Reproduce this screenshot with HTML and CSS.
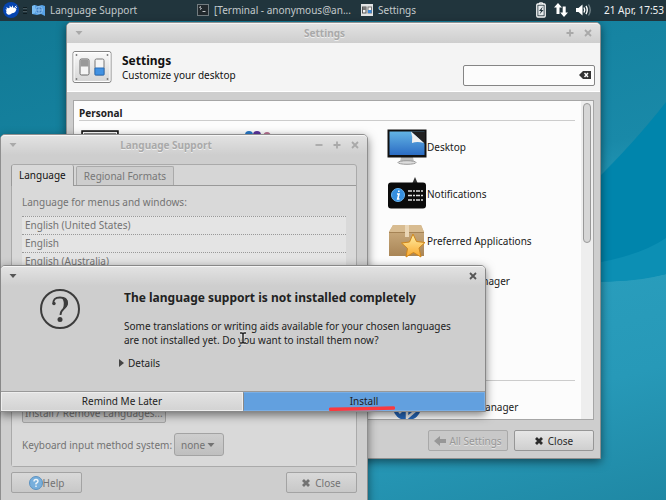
FILE: index.html
```html
<!DOCTYPE html>
<html lang="en">
<head>
<meta charset="utf-8">
<title>Desktop</title>
<link rel="stylesheet" href="styles.css">
</head>
<body>
<svg class="defs" width="0" height="0" aria-hidden="true">
  <defs>
    <linearGradient id="blue" x1="0" y1="0" x2="0" y2="1"><stop offset="0" stop-color="#63b4e4"/><stop offset="1" stop-color="#2b6cc4"/></linearGradient>
    <linearGradient id="box" x1="0" y1="0" x2="0" y2="1"><stop offset="0" stop-color="#cfb184"/><stop offset="1" stop-color="#a98556"/></linearGradient>
    <linearGradient id="star" x1="0" y1="0" x2="0" y2="1"><stop offset="0" stop-color="#fff0a8"/><stop offset="1" stop-color="#f9a72b"/></linearGradient>
    <linearGradient id="plate" x1="0" y1="0" x2="0" y2="1"><stop offset="0" stop-color="#fafafa"/><stop offset="1" stop-color="#d4d4d4"/></linearGradient>
    <symbol id="cross" viewBox="0 0 8 8"><path d="M1 1L7 7M7 1L1 7" stroke="currentColor" stroke-width="1.800" fill="none"/></symbol>
    <symbol id="cross-bold" viewBox="0 0 8 8"><path d="M1 1L7 7M7 1L1 7" stroke="currentColor" stroke-width="2.800" fill="none"/></symbol>
    <symbol id="plus" viewBox="0 0 8 8"><path d="M4 .5V7.5M.5 4H7.5" stroke="currentColor" stroke-width="1.800" fill="none"/></symbol>
    <symbol id="minus" viewBox="0 0 8 8"><path d="M.5 4H7.5" stroke="currentColor" stroke-width="1.800" fill="none"/></symbol>
    <symbol id="down" viewBox="0 0 8 8"><path d="M.5 2H7.5L4 6Z" fill="currentColor"/></symbol>
  </defs>
</svg>

<main class="desktop">
  <svg class="wallpaper" viewBox="0 0 666 500" preserveAspectRatio="none" aria-hidden="true">
    <path d="M666 102Q635 142 590 186V282Q630 282 666 274Z" fill="#0085ac"/>
    <path d="M590 264Q640 256 666 238V274Q630 284 590 280Z" fill="#0c8fb4"/>
  </svg>

  <header class="panel">
    <button class="menu" aria-label="Applications"><svg width="16" height="16" viewBox="0 0 16 16"><circle cx="8" cy="8" r="8" fill="#0645b0"/><path d="M4 12Q2.500 10.500 3.500 9L2.500 7.200L4 7.500L3.300 5L5.300 6.300Q6 5.500 6.800 5.800L6.500 3.500L8.500 5.500L9.800 3.300L10.300 5.800Q12 5.500 13.500 7L12.500 9.500Q11.500 11 9 11.300Q7.500 13 5.500 12.700Z" fill="#fff"/><path d="M11.500 5.500L13.300 3.800M12.500 6L14 5" stroke="#fff"/></svg></button>
    <span class="grip" aria-hidden="true"></span>
    <button class="task task-lang"><svg width="13" height="12" viewBox="0 0 13 12"><path d="M0 2L3 1L6 2L10 1L13 2V12L9 10L5 11L0 10Z" fill="#56a2e6"/><path d="M0 2L3 1V9L0 10Z" fill="#7bbdf2"/><circle cx="7" cy="6" r="3.500" fill="#3c7fc8" stroke="#8ec4f2"/><path d="M7 3V9M4 6H10" stroke="#8ec4f2"/></svg><span>Language Support</span></button>
    <button class="task task-term"><svg width="12" height="12" viewBox="0 0 12 12"><rect x=".5" y=".5" width="11" height="11" fill="#22292d" stroke="#737c80"/><path d="M4 2.500L2.500 3.300L4.500 4.500L3 5.500M5.500 7.500H8.500" stroke="#c2c7c9" fill="none"/></svg><span>[Terminal - anonymous@an...</span></button>
    <button class="task"><svg width="12" height="12" viewBox="0 0 12 12"><rect width="12" height="12" fill="#e2e4e5"/><rect x="1.500" y="3" width="3.500" height="6" fill="#f4f4f4" stroke="#555"/><rect x="2" y="3" width="3" height="3" fill="#777"/><rect x="7" y="3" width="3.500" height="6" fill="#f4f4f4" stroke="#777"/><rect x="7" y="6" width="3.500" height="3" fill="#3b87d8"/></svg><span>Settings</span></button>
    <div class="tray">
      <svg width="10" height="16" viewBox="0 0 10 16"><path d="M3.500 2V.8H6.500V2" fill="none" stroke="#fff"/><rect x=".8" y="2" width="8.400" height="13" rx="1" fill="none" stroke="#fff" stroke-width="1.300"/><rect x="2.300" y="3.600" width="5.400" height="9.800" fill="#e8ecee"/><path d="M6.800 4.500L3 9H5L3.500 12.500L7.500 8H5.500Z" fill="#20333b"/></svg>
      <svg width="14" height="14" viewBox="0 0 14 14"><path d="M4 0L8 4.500H5.500V11H2.500V4.500H0Z" fill="#fff"/><path d="M10 14L14 9.500H11.700V3.500H8.700V9.500H6.200Z" fill="#fff"/></svg>
      <svg width="16" height="14" viewBox="0 0 16 14"><path d="M0 5H2.500L6.500 1.500V12.500L2.500 9H0Z" fill="#fff"/><path d="M8 4.500Q9.500 7 8 9.500M10 2.800Q12.500 7 10 11.200" stroke="#fff" stroke-width="1.400" fill="none"/><path d="M12.500 1.500Q16 7 12.500 12.500" stroke="#76858b" stroke-width="1.300" fill="none"/></svg>
      <time>21 Apr, 17:53</time>
    </div>
  </header>

  <section class="window settings">
    <div class="titlebar"><svg class="glyph"><use href="#down"/></svg><h2>Settings</h2><div class="controls"><svg class="glyph"><use href="#plus"/></svg><svg class="glyph"><use href="#cross"/></svg></div></div>
    <div class="banner">
      <svg width="40" height="34" viewBox="0 0 40 34"><rect x="1" y="1.500" width="38" height="31" rx="2" fill="url(#plate)" stroke="#858585"/><rect x="2" y="2.500" width="36" height="29" rx="1" fill="none" stroke="#fff"/><g fill="#777"><circle cx="4.500" cy="5" r=".9"/><circle cx="35.500" cy="5" r=".9"/><circle cx="4.500" cy="29" r=".9"/><circle cx="35.500" cy="29" r=".9"/></g><rect x="8" y="9" width="9" height="16" rx="1.500" fill="#f5f5f5" stroke="#666"/><rect x="8.500" y="9.500" width="8" height="7" fill="#999"/><rect x="23" y="9" width="9" height="16" rx="1.500" fill="#f5f5f5" stroke="#777"/><path d="M23 18H32V25H23Z" fill="#4292e2" stroke="#2b6fb9"/></svg>
      <div class="heading"><h1>Settings</h1><p>Customize your desktop</p></div>
      <div class="search"><input type="text" aria-label="Search settings"><svg width="12" height="8" viewBox="0 0 12 8"><path d="M4 0H12V8H4L0 4Z" fill="#333"/><path d="M5.500 2L9 6M9 2L5.500 6" stroke="#fff" stroke-width="1.400"/></svg></div>
    </div>
    <div class="listbox">
      <div class="categories">
        <h3>Personal</h3>
        <div class="grid">
          <svg class="peek" width="38" height="30" viewBox="0 0 38 30"><rect x="1" y="1" width="36" height="28" fill="#888" stroke="#111" stroke-width="1.500"/><rect x="2.500" y="2.500" width="33" height="25" fill="none" stroke="#fff"/></svg>
          <svg class="peek" width="38" height="30" viewBox="0 0 38 30"><circle cx="14" cy="5" r="4" fill="#2777c6"/><circle cx="22" cy="5" r="4" fill="#5b359d"/><circle cx="32" cy="5.500" r="3.500" fill="#b87191"/></svg>
          <div class="items">
            <a href="#"><svg width="40" height="36" viewBox="0 0 40 36"><path d="M14 28H26L27 33H13Z" fill="#bdbdbd"/><ellipse cx="20" cy="33.500" rx="9" ry="1.800" fill="#ddd" stroke="#999"/><rect x=".5" y=".5" width="39" height="28" fill="#111"/><rect x="2.500" y="2.500" width="35" height="23.500" fill="url(#blue)"/><path d="M24 2.500H38V15Z" fill="#222"/><path d="M24 2.500L37 14Q30 12 25 14Q26 8 24 2.500Z" fill="#f1f1f1"/></svg>Desktop</a>
            <a href="#"><svg width="40" height="36" viewBox="0 0 40 36"><path d="M25 8L28 1L31 8Z" fill="#333"/><rect x="1" y="6.500" width="38" height="26" rx="3" fill="#0b0b0b"/><circle cx="11" cy="19" r="6.500" fill="#368fe0" stroke="#69b5f1"/><path d="M11.800 14.500V16M10 18H12L10.700 23H12.500" stroke="#fff" stroke-width="1.600" fill="none"/><path d="M21 15H36M21 19.500H36M21 24H36" stroke="#ddd" stroke-width="1.500" stroke-dasharray="4 1 2 1"/></svg>Notifications</a>
            <a href="#"><svg width="40" height="36" viewBox="0 0 40 36"><path d="M6 2H34L37 9V33H2V9Z" fill="url(#box)"/><path d="M6 2H34L37 9H2Z" fill="#d8bc91"/><path d="M2 9.500H37" stroke="#a58355"/><path d="M18 2H22V14H18Z" fill="#ead6b6"/><path d="M26 11L29.500 18.500L38 19.500L32 25L34 34L26.500 29.500L19 34L20.500 25.500L14.500 20L22.500 19Z" fill="url(#star)" stroke="#cf861b"/></svg>Preferred Applications</a>
            <a href="#" class="short"><span class="noicon"></span>Window Manager</a>
          </div>
        </div>
        <h3 class="second">Hardware</h3>
        <div class="grid"><div class="items"><a href="#"><svg width="40" height="36" viewBox="0 0 40 36"><rect x="6" y="2" width="28" height="29" rx="13" fill="#2667b9"/><path d="M12 10L27 23L20 29V4L27 10L12 24" fill="none" stroke="#eee" stroke-width="2.500"/></svg>Bluetooth Manager</a></div></div>
      </div>
      <div class="scroll" aria-hidden="true"><div class="thumb"></div></div>
    </div>
    <footer class="actions"><button class="btn" disabled><svg width="12" height="12" viewBox="0 0 12 12"><path d="M6 1V4H12V8H6V11L0 6Z" fill="currentColor"/></svg>All Settings</button><button class="btn"><svg class="glyph"><use href="#cross-bold"/></svg>Close</button></footer>
  </section>

  <section class="window language">
    <div class="titlebar"><svg class="glyph"><use href="#down"/></svg><h2>Language Support</h2><div class="controls"><svg class="glyph"><use href="#minus"/></svg><svg class="glyph"><use href="#plus"/></svg><svg class="glyph"><use href="#cross"/></svg></div></div>
    <div class="notebook">
      <div class="tabs" role="tablist"><button role="tab" class="tab active" aria-selected="true">Language</button><button role="tab" class="tab" aria-selected="false">Regional Formats</button></div>
      <div class="page">
        <p>Language for menus and windows:</p>
        <ul><li>English (United States)</li><li>English</li><li>English (Australia)</li></ul>
        <button class="btn install">Install / Remove Languages...</button>
        <div class="method"><label for="ime">Keyboard input method system:</label><span class="combo"><select id="ime"><option>none</option></select><svg class="glyph"><use href="#down"/></svg></span></div>
      </div>
    </div>
    <footer class="lang-actions"><button class="btn help"><svg width="14" height="14" viewBox="0 0 14 14"><circle cx="7" cy="7" r="6.500" fill="#78afdc" stroke="#5c92c0"/><path d="M5 5.500Q5 3.500 7 3.500T9 5.300Q9 6.500 7 7.500V8.500M7 9.500V11" stroke="#f1f5f8" stroke-width="1.400" fill="none"/></svg>Help</button><button class="btn"><svg class="glyph"><use href="#cross-bold"/></svg>Close</button></footer>
  </section>

  <section class="window dialog" role="dialog" aria-labelledby="dialog-title">
    <div class="titlebar"><svg class="glyph"><use href="#down"/></svg><svg class="glyph"><use href="#cross"/></svg></div>
    <div class="message">
      <svg width="40" height="40" viewBox="0 0 40 40"><circle cx="20" cy="20" r="19" fill="none" stroke="#3c3c3c" stroke-width="2"/><path d="M13.500 15Q12.500 8.500 20 8.500Q27 8.500 27 14Q27 17 23.500 20Q20.500 22.500 20.500 26" fill="none" stroke="#3c3c3c" stroke-width="1.800"/><path d="M20 8Q28 8.500 28 14Q28 17.500 22.500 21Q24 17 23.800 14Q23.500 9.500 20 8Z" fill="#3c3c3c"/><circle cx="14" cy="14.500" r="1.700" fill="#3c3c3c"/><circle cx="20" cy="30.500" r="2.500" fill="#3c3c3c"/></svg>
      <div class="copy">
        <h1 id="dialog-title">The language support is not installed completely</h1>
        <p>Some translations or writing aids available for your chosen languages<br>are not installed yet. Do you want to install them now?</p>
        <button class="details"><svg width="5" height="8" viewBox="0 0 5 8"><path d="M0 0L5 4L0 8Z" fill="#444"/></svg>Details</button>
      </div>
    </div>
    <div class="choices"><button>Remind Me Later</button><button class="primary">Install</button></div>
    <svg class="underline" width="66" height="5" viewBox="0 0 66 5" aria-hidden="true"><path d="M1.500 3.300L36 2.800L64.500 2" stroke="#f93a3f" stroke-width="3.500" stroke-linecap="round" fill="none"/></svg>
    <svg class="cursor" width="8" height="14" viewBox="0 0 8 14" aria-hidden="true"><path d="M1 2H3L4 3L5 2H7M4 3V11M1 12H3L4 11L5 12H7" stroke="#eee" stroke-width="3" fill="none"/><path d="M1 2H3L4 3L5 2H7M4 3V11M1 12H3L4 11L5 12H7" stroke="#222" stroke-width="1.500" fill="none"/></svg>
  </section>
</main>
</body>
</html>
```
FILE: styles.css
```css
* { box-sizing: border-box; }
body { margin: 0; font: 10px/14px "Noto Sans", sans-serif; color: #222; }
h1, h2, h3, p, ul { margin: 0; padding: 0; font-size: 10px; list-style: none; }
button, input, select { font: inherit; color: inherit; margin: 0; padding: 0; border: 0; background: none; }
a { color: inherit; text-decoration: none; }
svg { flex: none; display: block; }
.defs { position: absolute; }

.desktop { position: relative; min-height: 100vh; overflow: hidden; background: linear-gradient(165deg, #117893 0%, #1684a2 30%, #1989a8 45%, #2a9fbe 56%, #2799b8 80%, #1f88a4 100%); }
.wallpaper { position: absolute; inset: 0; width: 100%; height: 100%; }

.panel { position: relative; display: flex; align-items: center; height: 21px; padding: 0 2px 1px 3px; background: #21353d; color: #c3c9cb; white-space: nowrap; }
.grip { width: 4px; height: 7px; margin: 0 5px 0 4px; background: repeating-linear-gradient(#0f1d22 0 1px, #46555b 1px 2px, transparent 2px 3px); }
.task { display: flex; align-items: center; gap: 5px; margin-right: 10px; }
.task-lang { width: 155px; }
.task-term { width: 154px; }
.tray { display: flex; align-items: center; gap: 8px; margin-left: auto; color: #f0f2f3; }
.tray time { margin-left: 4px; }

.window { position: absolute; display: flex; flex-direction: column; background: #cecece; border: 1px solid #8f8f8f; border-radius: 5px 5px 0 0; box-shadow: 0 3px 10px rgba(0, 0, 0, .5); }
.titlebar { display: flex; align-items: center; justify-content: space-between; height: 20px; padding: 0 8px 2px; border-top: 1px solid #f6f6f6; border-radius: 4px 4px 0 0; background: linear-gradient(#e2e2e2, #cecece); color: #a9a9a9; }
.titlebar h2 { flex: 1; text-align: center; text-shadow: 0 1px #eee; }
.controls { display: flex; gap: 10px; }
.glyph { width: 8px; height: 8px; }

.settings { left: 66px; right: 65px; top: 22px; bottom: 41px; }
.banner { display: flex; align-items: center; gap: 10px; height: 49px; padding: 0 5px; background: #f4f4f4; border-bottom: 1px solid #fff; color: #111; }
.heading { flex: 1; }
h1 { font-size: 12px; line-height: 15px; }
.search { display: flex; align-items: center; width: 132px; height: 21px; margin-top: 16px; padding-right: 3px; border: 1px solid #858585; border-radius: 2px; background: #fcfcfc; }
.search input { flex: 1; min-width: 0; height: 100%; outline: 0; }
.listbox { flex: 1; min-height: 0; display: flex; margin: 8px 6px 0; border: 1px solid #a6a6a6; background: #fcfcfc; overflow: hidden; }
.categories { flex: 1; padding: 5px 6px 0 5px; }
.categories h3 { height: 15px; line-height: 14px; border-bottom: 1px solid #ccc; }
.categories .second { margin-top: 74px; }
.grid { display: grid; grid-template-columns: 154px 154px 1fr; }
.peek { margin: 9px 0 0 2px; }
.items { grid-column: 3; display: flex; flex-direction: column; gap: 11px; padding-top: 8px; }
.items a { display: flex; align-items: center; height: 36px; color: #1a1a1a; white-space: nowrap; }
.items .short { height: 22px; }
.noicon { width: 40px; }
.scroll { width: 12px; padding: 2px; background: #eee; }
.thumb { width: 8px; height: 140px; border: 1px solid #999; border-radius: 4px; background: #d6d6d6; }

.btn { display: flex; align-items: center; justify-content: center; gap: 5px; height: 21px; border: 1px solid #969696; border-radius: 2px; background: linear-gradient(#e6e6e6, #cfcfcf); color: #2b2b2b; white-space: nowrap; }
.btn:disabled { gap: 3px; color: #979797; border-color: #a9a9a9; background: #c8c8c8; text-shadow: 0 1px #e4e4e4; }
.actions { display: flex; justify-content: flex-end; gap: 6px; height: 38px; padding: 10px 6px 0; }
.actions .btn { width: 80px; }

.language { left: 0; right: 298px; top: 134px; height: 380px; color: #737373; }
.notebook { margin: 9px 10px 0; border: 1px solid #aaa; border-radius: 3px; background: #d6d6d6; }
.tabs { display: flex; align-items: flex-end; gap: 2px; height: 21px; border-bottom: 1px solid #999; }
.tab { height: 19px; padding: 0 7px; border: 1px solid #aaa; border-bottom: 0; border-radius: 2px 2px 0 0; background: #cdcdcd; color: #777; }
.tab.active { height: 21px; margin: 0 0 -1px -1px; padding-bottom: 1px; border-color: #999; border-top: 0; background: #d9d9d9; color: #111; }
.page { height: 280px; padding: 9px 10px; display: flex; flex-direction: column; background: #d9d9d9; }
.page ul { height: 181px; margin: 7px 0 0; background: #e4e4e4; }
.page li { height: 18px; padding-left: 3px; line-height: 16px; border-top: 1px dotted #999; }
.page .btn { align-self: flex-start; height: 21px; margin-top: 5px; padding: 0 2px; }
.language .btn { color: #737373; border-color: #a3a3a3; background: linear-gradient(#d9d9d9, #c8c8c8); }
.method { display: flex; align-items: center; gap: 2px; margin-top: 10px; }
.combo { display: flex; align-items: center; width: 50px; height: 23px; padding: 0 8px 0 6px; border: 1px solid #a3a3a3; border-radius: 3px; background: linear-gradient(#cecece, #bfbfbf); }
.combo select { flex: 1; min-width: 0; appearance: none; }
.lang-actions { display: flex; justify-content: space-between; margin: 5px 10px 0; }
.lang-actions .btn { width: 71px; }
.lang-actions .help { gap: 0; }

.dialog { left: 0; right: 180px; top: 265px; border-color: #888; }
.dialog .titlebar { color: #555; }
.message { display: flex; gap: 44px; height: 105px; padding: 3px 20px 0 39px; }
.copy h1 { margin-top: 1px; }
.copy p { margin-top: 14px; white-space: nowrap; }
.details { display: flex; align-items: center; gap: 4px; height: 14px; margin: 9px 0 0 -5px; }
.choices { display: flex; height: 20px; border-top: 1px solid #999; }
.choices button { flex: 1; padding-bottom: 2px; background: linear-gradient(#e2e2e2, #d3d3d3); border: 1px solid #eee; line-height: 14px; }
.choices .primary { background: #62a0df; border-color: #79aee5; border-left: 1px solid #888; }
.underline { position: absolute; right: 90px; bottom: 0; }
.cursor { position: absolute; left: 238px; top: 65px; }
```
